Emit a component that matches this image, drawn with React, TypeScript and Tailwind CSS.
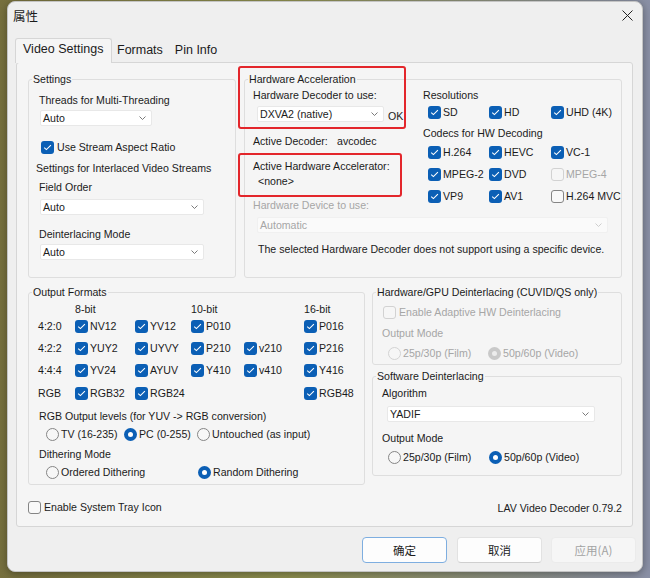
import React from "react";

const font = "font-['Liberation_Sans',Arial,sans-serif]";
const cjk = "font-['Noto_Sans_CJK_SC','Liberation_Sans',sans-serif]";

function Box({ checked, disabled }: { checked?: boolean; disabled?: boolean }) {
  if (checked)
    return (
      <span className="w-[13px] h-[13px] rounded-[3px] bg-[#0b5fb5] flex items-center justify-center shrink-0">
        <svg width="9" height="7" viewBox="0 0 9 7">
          <path d="M1.2 3.6 L3.4 5.6 L7.9 1.2" fill="none" stroke="#ffffff" strokeWidth="1.1" />
        </svg>
      </span>
    );
  return (
    <span
      className={
        disabled
          ? "w-[13px] h-[13px] rounded-[3px] border border-[#d2d2d2] bg-[#f6f6f6] shrink-0"
          : "w-[13px] h-[13px] rounded-[3px] border border-[#858585] bg-[#f9f9f9] shrink-0"
      }
    />
  );
}

function Check({ label, checked, disabled, gap }: { label: string; checked?: boolean; disabled?: boolean; gap?: string }) {
  return (
    <span className={`inline-flex items-center h-[14px] ${gap ?? "gap-[2px]"}`}>
      <Box checked={checked} disabled={disabled} />
      <span className={disabled ? "text-[#a6a6a6]" : ""}>{label}</span>
    </span>
  );
}

function Radio({ label, on, disabled }: { label: string; on?: boolean; disabled?: boolean }) {
  let dot;
  if (on && !disabled)
    dot = (
      <span className="w-[13px] h-[13px] rounded-full bg-[#0b5fb5] flex items-center justify-center shrink-0">
        <span className="w-[5px] h-[5px] rounded-full bg-white" />
      </span>
    );
  else if (on)
    dot = (
      <span className="w-[13px] h-[13px] rounded-full bg-[#c9c9c9] flex items-center justify-center shrink-0">
        <span className="w-[5px] h-[5px] rounded-full bg-[#ececec]" />
      </span>
    );
  else
    dot = (
      <span
        className={
          disabled
            ? "w-[13px] h-[13px] rounded-full border border-[#d3d3d3] bg-[#f6f6f6] shrink-0"
            : "w-[13px] h-[13px] rounded-full border border-[#858585] bg-[#f7f7f7] shrink-0"
        }
      />
    );
  return (
    <span className="inline-flex items-center gap-[2px] h-[14px]">
      {dot}
      <span className={disabled ? "text-[#a6a6a6]" : ""}>{label}</span>
    </span>
  );
}

function Chevron({ disabled }: { disabled?: boolean }) {
  return (
    <svg width="7" height="4" viewBox="0 0 7 4">
      <path d="M0.5 0.5 L3.5 3.5 L6.5 0.5" fill="none" stroke={disabled ? "#c8c8c8" : "#6b6b6b"} strokeWidth="0.9" />
    </svg>
  );
}

function Combo({ value, className, disabled }: { value: string; className: string; disabled?: boolean }) {
  return (
    <div
      className={`h-[16px] flex items-center justify-between pl-[2px] pr-[5px] rounded-[2px] ${
        disabled ? "bg-[#fafafa] border border-[#f0f0f0] text-[#a6a6a6]" : "bg-white border border-[#e8e8e8]"
      } ${className}`}
    >
      <span>{value}</span>
      <Chevron disabled={disabled} />
    </div>
  );
}

function Group({ title, className, children }: { title: string; className: string; children?: React.ReactNode }) {
  return (
    <fieldset className={`border border-[#dedede] rounded-[3px] ${className}`}>
      <legend className="ml-[3px] px-[1px] leading-[13px]">{title}</legend>
      {children}
    </fieldset>
  );
}

const formatRows: [string, (string | null)[]][] = [
  ["4:2:0", ["NV12", "YV12", "P010", null, "P016"]],
  ["4:2:2", ["YUY2", "UYVY", "P210", "v210", "P216"]],
  ["4:4:4", ["YV24", "AYUV", "Y410", "v410", "Y416"]],
  ["RGB", ["RGB32", "RGB24", null, null, "RGB48"]],
];

export default function App() {
  return (
    <div className="w-[650px] h-[578px] overflow-hidden pt-[1px] pl-[7px] bg-[linear-gradient(90deg,#77703e_0%,#8f9150_45%,#8a90a6_100%)]">
      <div
        className={`w-[636px] h-[571px] bg-[#efefef] rounded-[8px] border border-[#c4c4c4] shadow-[0_2px_8px_rgba(0,0,0,0.35)] flex flex-col text-[10.6px] leading-[13px] text-[#1b1b1b] ${font}`}
      >
        {/* Title bar */}
        <div className="h-[27px] flex items-center justify-between pl-[5px] pr-[9px]">
          <span className={`text-[12.5px] ${cjk}`}>属性</span>
          <svg width="11" height="11" viewBox="0 0 11 11">
            <path d="M0.5 0.5 L10.5 10.5 M10.5 0.5 L0.5 10.5" stroke="#222" strokeWidth="1" />
          </svg>
        </div>

        {/* Tabs */}
        <div className="mt-[9px] h-[24px] flex items-start relative z-10 text-[12.5px] leading-[15px]">
          <div className="ml-[7px] w-[97px] h-[25px] pl-[7px] pt-[3px] bg-[#f5f5f5] border border-b-0 border-[#d6d6d6] rounded-t-[3px]">
            Video Settings
          </div>
          <div className="ml-[5px] pt-[5px]">Formats</div>
          <div className="ml-[12px] pt-[5px]">Pin Info</div>
        </div>

        {/* Tab page */}
        <div className="ml-[8px] w-[617px] h-[465px] bg-[#f5f5f5] border border-[#d6d6d6] rounded-[3px] pl-[11px] pt-[10px] pr-[10px] flex flex-col">
          <div className="flex gap-[8px]">
            <Group title="Settings" className="w-[208px] h-[205px]">
              <div className="ml-[10px] mt-[8px]">Threads for Multi-Threading</div>
              <Combo value="Auto" className="ml-[11px] mt-[3px] w-[112px]" />
              <div className="ml-[12px] mt-[14px]">
                <Check label="Use Stream Aspect Ratio" checked gap="gap-[3px]" />
              </div>
              <div className="ml-[7px] mt-[8px]">Settings for Interlaced Video Streams</div>
              <div className="ml-[10px] mt-[6px]">Field Order</div>
              <Combo value="Auto" className="ml-[11px] mt-[5px] w-[164px]" />
              <div className="ml-[10px] mt-[13px]">Deinterlacing Mode</div>
              <Combo value="Auto" className="ml-[11px] mt-[3px] w-[164px]" />
            </Group>

            <div className="relative">
              <Group title="Hardware Acceleration" className="w-[378px] h-[205px]">
                <div className="flex">
                  <div className="w-[178px]">
                    <div className="ml-[8px] mt-[3px]">Hardware Decoder to use:</div>
                    <div className="flex items-start mt-[4px]">
                      <Combo value="DXVA2 (native)" className="ml-[12px] w-[127px]" />
                      <span className="ml-[4px] mt-[4px]">OK</span>
                    </div>
                    <div className="ml-[8px] mt-[12px] flex">
                      <span className="w-[84px]">Active Decoder:</span>
                      <span>avcodec</span>
                    </div>
                    <div className="ml-[8px] mt-[12px]">Active Hardware Accelerator:</div>
                    <div className="ml-[13px] mt-[2px]">&lt;none&gt;</div>
                    <div className="ml-[8px] mt-[11px] text-[#a6a6a6]">Hardware Device to use:</div>
                  </div>
                  <div>
                    <div className="mt-[3px]">Resolutions</div>
                    <div className="ml-[5px] mt-[3px] grid grid-cols-[61px_62px_auto]">
                      <Check label="SD" checked />
                      <Check label="HD" checked />
                      <Check label="UHD (4K)" checked />
                    </div>
                    <div className="mt-[8px]">Codecs for HW Decoding</div>
                    <div className="ml-[5px] mt-[5px] grid grid-cols-[61px_62px_auto] gap-y-[8px]">
                      <Check label="H.264" checked />
                      <Check label="HEVC" checked />
                      <Check label="VC-1" checked />
                      <Check label="MPEG-2" checked />
                      <Check label="DVD" checked />
                      <Check label="MPEG-4" disabled />
                      <Check label="VP9" checked />
                      <Check label="AV1" checked />
                      <Check label="H.264 MVC" />
                    </div>
                  </div>
                </div>
                <Combo value="Automatic" disabled className="ml-[12px] mt-[5px] w-[351px]" />
                <div className="ml-[13px] mt-[10px]">
                  The selected Hardware Decoder does not support using a specific device.
                </div>
              </Group>
              {/* annotation boxes */}
              <div className="absolute left-[-6px] top-[-7px] w-[168px] h-[63px] border-2 border-[#e3262b] rounded-[3px]" />
              <div className="absolute left-[-6px] top-[80px] w-[164px] h-[44px] border-2 border-[#e3262b] rounded-[3px]" />
            </div>
          </div>

          <div className="mt-[8px] flex gap-[7px]">
            <Group title="Output Formats" className="w-[337px] h-[199px]">
              <div className="ml-[9px] mt-[4px] grid grid-cols-[37px_60px_56px_53px_60px_1fr]">
                <span />
                <span>8-bit</span>
                <span />
                <span>10-bit</span>
                <span />
                <span>16-bit</span>
              </div>
              {formatRows.map(([name, cells], i) => (
                <div
                  key={name}
                  className={`ml-[9px] h-[14px] grid grid-cols-[37px_60px_56px_53px_60px_1fr] items-center ${
                    i === 0 ? "mt-[3px]" : i === 3 ? "mt-[9px]" : "mt-[8px]"
                  }`}
                >
                  <span>{name}</span>
                  {cells.map((c, j) => (c ? <Check key={j} label={c} checked /> : <span key={j} />))}
                </div>
              ))}
              <div className="ml-[10px] mt-[10px]">RGB Output levels (for YUV -&gt; RGB conversion)</div>
              <div className="ml-[17px] mt-[4px] grid grid-cols-[78px_73px_auto]">
                <Radio label="TV (16-235)" />
                <Radio label="PC (0-255)" on />
                <Radio label="Untouched (as input)" />
              </div>
              <div className="ml-[10px] mt-[7px]">Dithering Mode</div>
              <div className="ml-[17px] mt-[4px] grid grid-cols-[152px_auto]">
                <Radio label="Ordered Dithering" />
                <Radio label="Random Dithering" on />
              </div>
            </Group>

            <div className="flex flex-col">
              <Group title="Hardware/GPU Deinterlacing (CUVID/QS only)" className="w-[250px] h-[79px]">
                <div className="ml-[10px] mt-[6px]">
                  <Check label="Enable Adaptive HW Deinterlacing" disabled gap="gap-[3px]" />
                </div>
                <div className="ml-[9px] mt-[5px] text-[#a6a6a6]">Output Mode</div>
                <div className="ml-[15px] mt-[7px] grid grid-cols-[100px_auto]">
                  <Radio label="25p/30p (Film)" disabled />
                  <Radio label="50p/60p (Video)" on disabled />
                </div>
              </Group>
              <Group title="Software Deinterlacing" className="mt-[5px] w-[250px] h-[106px]">
                <div className="ml-[9px] mt-[4px]">Algorithm</div>
                <Combo value="YADIF" className="ml-[14px] mt-[6px] w-[208px]" />
                <div className="ml-[9px] mt-[10px]">Output Mode</div>
                <div className="ml-[15px] mt-[5px] grid grid-cols-[101px_auto]">
                  <Radio label="25p/30p (Film)" />
                  <Radio label="50p/60p (Video)" on />
                </div>
              </Group>
            </div>
          </div>

          <div className="mt-[15px] flex items-center justify-between">
            <Check label="Enable System Tray Icon" gap="gap-[3px]" />
            <span className="mt-[2px]">LAV Video Decoder 0.79.2</span>
          </div>
        </div>

        {/* Buttons */}
        <div className={`mt-[10px] pr-[6px] flex justify-end text-[11.5px] ${cjk}`}>
          <button className="w-[85px] h-[26px] rounded-[4px] bg-[#fdfdfd] border border-[#7eaee0]">确定</button>
          <button className="ml-[10px] w-[85px] h-[26px] rounded-[4px] bg-[#fdfdfd] border border-[#e2e2e2] border-b-[#cfcfcf]">
            取消
          </button>
          <button className="ml-[9px] w-[85px] h-[26px] rounded-[4px] bg-[#f6f6f6] border border-[#ebebeb] text-[#a3a3a3]">
            应用(A)
          </button>
        </div>
      </div>
    </div>
  );
}
